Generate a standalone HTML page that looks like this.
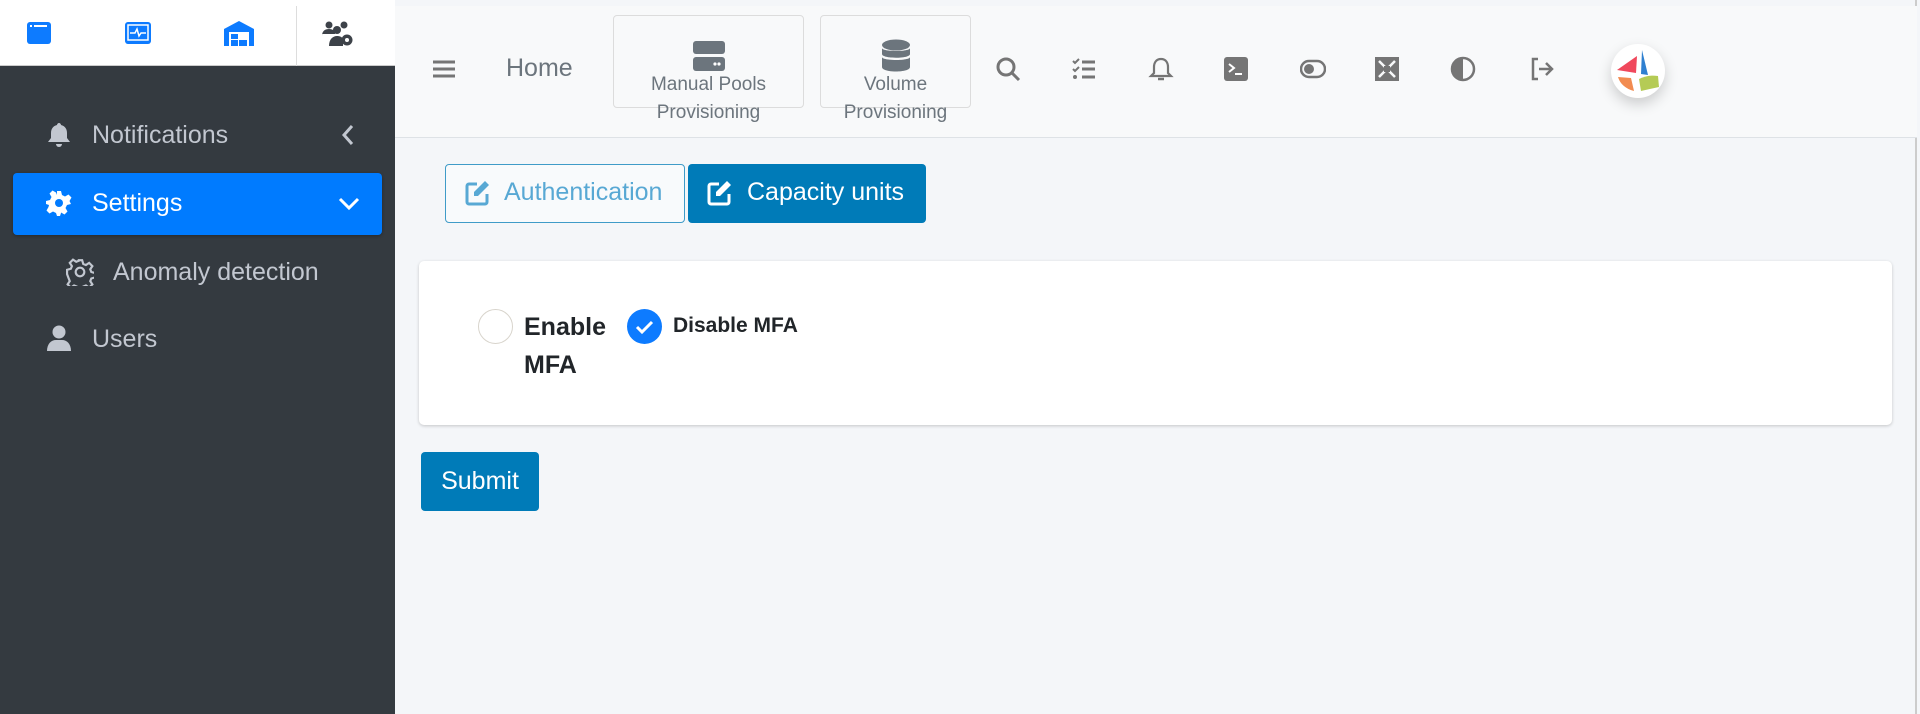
<!DOCTYPE html>
<html><head><meta charset="utf-8"><style>
*{box-sizing:border-box;margin:0;padding:0}
body{width:1920px;height:714px;overflow:hidden;background:#f4f6f9;font-family:"Liberation Sans",sans-serif;position:relative}
.abs{position:absolute}
#side{left:0;top:0;width:395px;height:714px;background:#343a40}
#sidetop{left:0;top:0;width:395px;height:66px;background:#fff;border-bottom:1px solid #ccc}
.nav{color:#c2c7d0;font-size:25px;line-height:28px}
#main{left:395px;top:0;width:1522px;height:714px;background:#f4f6f9;border-right:2px solid #ccc}
#hdr{left:395px;top:6px;width:1522px;height:132px;background:#f8f9fa;border-bottom:1px solid #dee2e6}
.box{border:1px solid #dcdcdc;border-radius:4px;background:#f8f9fa}
.ico{width:26px;height:26px;top:56px}
</style></head><body>
<div id="main" class="abs"></div>
<div id="hdr" class="abs"></div>
<div id="side" class="abs"></div>
<div id="sidetop" class="abs"></div>
<div class="abs" style="left:296px;top:6px;width:1px;height:60px;background:#ddd"></div>
<svg class="abs" style="left:26px;top:21px" width="26" height="24"><rect x="1" y="1" width="24" height="22" rx="3" fill="#0d7bff"/><rect x="4" y="4" width="2" height="2" fill="#fff"/><rect x="8" y="4" width="13" height="2" fill="#fff"/></svg>
<svg class="abs" style="left:124px;top:21px" width="28" height="24"><rect x="1" y="1" width="26" height="22" rx="3" fill="#0d7bff"/><rect x="4" y="4" width="20" height="15" fill="none" stroke="#fff" stroke-width="1.5"/><path d="M6 12h5l2-4 2 7 2-3h5" stroke="#fff" stroke-width="1.5" fill="none"/></svg>
<svg class="abs" style="left:223px;top:20px" width="32" height="26"><path d="M1 26V9L16 1l15 8v17h-5V12H6v14z" fill="#0d7bff"/><rect x="8" y="14" width="7" height="5" fill="#0d7bff"/><rect x="8" y="20" width="7" height="6" fill="#0d7bff"/><rect x="16" y="20" width="8" height="6" fill="#0d7bff"/></svg>
<svg class="abs" style="left:322px;top:20px" width="32" height="26" fill="#3d4249"><circle cx="7" cy="5" r="3.5"/><circle cx="22" cy="5" r="3.5"/><path d="M0 16c0-5 3-7 7-7s6 2 6 5H0z"/><circle cx="15" cy="10" r="4"/><path d="M7 26c0-7 4-10 8-10 3 0 5 1 6 3v7z"/><circle cx="25" cy="20" r="5.5"/><circle cx="25" cy="20" r="2" fill="#fff"/></svg>
<svg class="abs" style="left:47px;top:122px" width="24" height="26" fill="#c2c7d0"><path d="M12 1c1 0 2 1 2 2 4 1 6 4 6 8v5l3 4H1l3-4v-5c0-4 2-7 6-8 0-1 1-2 2-2z"/><path d="M9 22h6a3 3 0 0 1-6 0z"/></svg>
<div class="abs nav" style="left:92px;top:121px">Notifications</div>
<svg class="abs" style="left:341px;top:124px" width="14" height="22"><path d="M11 2L3 11l8 9" stroke="#c2c7d0" stroke-width="3" fill="none"/></svg>
<div class="abs" style="left:13px;top:173px;width:369px;height:62px;background:#007bff;border-radius:4px;box-shadow:0 1px 3px rgba(0,0,0,.3)"></div>
<svg class="abs" style="left:46px;top:190px" width="26" height="26" viewBox="0 0 26 26"><path fill="#fff" d="M11 1h4l1 4 3 1.5 3.5-2 3 3-2 3.5L25 14l0 0v0l-4 1-1.5 3 2 3.5-3 3-3.5-2L15 23l-1 3h-3l-1-3-3-1.5-3.5 2-3-3 2-3.5L3 15l-3-1v-3l4-1 1.5-3-2-3.5 3-3 3.5 2L11 5z"/><circle cx="13" cy="13" r="4" fill="#007bff"/></svg>
<div class="abs nav" style="left:92px;top:189px;color:#fff">Settings</div>
<svg class="abs" style="left:337px;top:196px" width="24" height="16"><path d="M3 3l9 9 9-9" stroke="#fff" stroke-width="3" fill="none"/></svg>
<svg class="abs" style="left:66px;top:258px" width="28" height="28" viewBox="0 0 26 26"><path fill="none" stroke="#c2c7d0" stroke-width="2" d="M11 2h4l1 3.5 2.5 1 3-2 3 3-2 3 1 2.5 3.5 1v4l-3.5 1-1 2.5 2 3-3 3-3-2-2.5 1-1 3.5h-4l-1-3.5-2.5-1-3 2-3-3 2-3-1-2.5L1 15v-4l3.5-1 1-2.5-2-3 3-3 3 2 2.5-1z"/><circle cx="13" cy="13" r="4" fill="none" stroke="#c2c7d0" stroke-width="2"/></svg>
<div class="abs nav" style="left:113px;top:258px">Anomaly detection</div>
<svg class="abs" style="left:47px;top:325px" width="24" height="26" fill="#c2c7d0"><circle cx="12" cy="7" r="6.5"/><path d="M0 26c0-7 4-11 9-11h6c5 0 9 4 9 11z"/></svg>
<div class="abs nav" style="left:92px;top:325px">Users</div>
<svg class="abs" style="left:432px;top:59px" width="24" height="20"><path d="M1 3h22M1 10h22M1 17h22" stroke="#757575" stroke-width="3"/></svg>
<div class="abs" style="left:506px;top:54px;font-size:25px;color:#6c757d">Home</div>
<div class="abs box" style="left:613px;top:15px;width:191px;height:93px"></div>
<div class="abs box" style="left:820px;top:15px;width:151px;height:93px"></div>
<svg class="abs" style="left:693px;top:41px" width="32" height="30"><rect x="0" y="0" width="32" height="13" rx="3" fill="#6c757d"/><rect x="0" y="16" width="32" height="14" rx="3" fill="#6c757d"/><circle cx="22" cy="23" r="1.6" fill="#fff"/><circle cx="26" cy="23" r="1.6" fill="#fff"/></svg>
<svg class="abs" style="left:881px;top:39px" width="30" height="34" fill="#6c757d"><ellipse cx="15" cy="6" rx="14" ry="5.5"/><path d="M1 9c0 4 28 4 28 0v6c0 5-28 5-28 0z"/><path d="M1 18c0 4 28 4 28 0v10c0 6-28 6-28 0z"/></svg>
<div class="abs" style="left:603px;top:71px;width:211px;text-align:center;font-size:19px;color:#6c757d;line-height:28px">Manual Pools<br>Provisioning</div>
<div class="abs" style="left:810px;top:71px;width:171px;text-align:center;font-size:19px;color:#6c757d;line-height:28px">Volume<br>Provisioning</div>
<svg class="abs ico" style="left:995px" viewBox="0 0 26 26"><circle cx="11" cy="11" r="8" fill="none" stroke="#757575" stroke-width="3"/><path d="M17 17l7 7" stroke="#757575" stroke-width="3"/></svg>
<svg class="abs ico" style="left:1071px" viewBox="0 0 26 26"><path d="M2 5l2 2 4-4M2 13l2 2 4-4" stroke="#757575" stroke-width="2" fill="none"/><circle cx="4" cy="21" r="2" fill="#757575"/><path d="M11 6h13M11 13h13M11 21h13" stroke="#757575" stroke-width="3"/></svg>
<svg class="abs ico" style="left:1148px" viewBox="0 0 26 26"><path d="M13 3c5 0 7 4 7 8v6l3 3H3l3-3v-6c0-4 2-8 7-8z" fill="none" stroke="#757575" stroke-width="2.2"/><path d="M10 23h6" stroke="#757575" stroke-width="2.5"/></svg>
<svg class="abs ico" style="left:1223px" viewBox="0 0 26 26"><rect x="1" y="1" width="24" height="24" rx="3" fill="#757575"/><path d="M6 8l5 4-5 4M12 18h7" stroke="#fff" stroke-width="2" fill="none"/></svg>
<svg class="abs ico" style="left:1300px" viewBox="0 0 26 26"><rect x="1" y="5" width="24" height="16" rx="8" fill="none" stroke="#757575" stroke-width="2.5"/><circle cx="9" cy="13" r="5" fill="#757575"/></svg>
<svg class="abs ico" style="left:1374px" viewBox="0 0 26 26"><rect x="1" y="1" width="24" height="24" fill="#757575"/><path d="M5 5l16 16M21 5L5 21" stroke="#f8f9fa" stroke-width="2.5"/><rect x="10" y="10" width="6" height="6" fill="#757575"/></svg>
<svg class="abs ico" style="left:1450px" viewBox="0 0 26 26"><circle cx="13" cy="13" r="11" fill="none" stroke="#757575" stroke-width="2.5"/><path d="M13 2a11 11 0 0 0 0 22z" fill="#757575"/></svg>
<svg class="abs ico" style="left:1529px" viewBox="0 0 26 26"><path d="M9 3H4v20h5" stroke="#757575" stroke-width="2.5" fill="none"/><path d="M10 13h13M17 7l6 6-6 6" stroke="#757575" stroke-width="2.5" fill="none"/></svg>
<div class="abs" style="left:1611px;top:44px;width:54px;height:54px;border-radius:50%;background:#fff;box-shadow:0 6px 14px rgba(0,0,0,.18)"></div>
<svg class="abs" style="left:1611px;top:44px" width="54" height="54" viewBox="0 0 54 54"><path d="M6 26L26 12 25 29z" fill="#f0485c"/><path d="M31 6l6 25-7-1z" fill="#2f80d0"/><path d="M7 33l13 1 3 13c-8-2-14-7-16-14z" fill="#f28b50"/><path d="M28 35c6-3 12-4 19-3l1 11-18 4z" fill="#b5cb55"/></svg>
<div class="abs" style="left:445px;top:164px;width:240px;height:59px;border:1px solid #3f9bc8;border-radius:4px;background:#f8fafc"></div>
<svg class="abs" style="left:465px;top:180px" width="26" height="26"><path d="M12 4H4a2 2 0 0 0-2 2v16a2 2 0 0 0 2 2h16a2 2 0 0 0 2-2v-8" stroke="#58a8d4" stroke-width="3" fill="none"/><path d="M20 1l4 4-11 11H9v-4z" fill="#58a8d4"/></svg>
<div class="abs" style="left:504px;top:178px;font-size:25px;color:#58a8d4">Authentication</div>
<div class="abs" style="left:688px;top:164px;width:238px;height:59px;border-radius:4px;background:#007bb8"></div>
<svg class="abs" style="left:707px;top:180px" width="26" height="26"><path d="M12 4H4a2 2 0 0 0-2 2v16a2 2 0 0 0 2 2h16a2 2 0 0 0 2-2v-8" stroke="#fff" stroke-width="3" fill="none"/><path d="M20 1l4 4-11 11H9v-4z" fill="#fff"/></svg>
<div class="abs" style="left:747px;top:178px;font-size:25px;color:#fff">Capacity units</div>
<div class="abs" style="left:419px;top:261px;width:1473px;height:164px;background:#fff;border-radius:5px;box-shadow:0 1px 3px rgba(0,0,0,.2)"></div>
<div class="abs" style="left:478px;top:309px;width:35px;height:35px;border-radius:50%;border:1.5px solid #d8d4cc;background:#fff"></div>
<div class="abs" style="left:524px;top:308px;font-size:25px;font-weight:bold;color:#212529;line-height:38px">Enable<br>MFA</div>
<div class="abs" style="left:627px;top:309px;width:35px;height:35px;border-radius:50%;background:#0d7bff"></div>
<svg class="abs" style="left:627px;top:309px" width="35" height="35"><path d="M10 18l5 5 10-10" stroke="#fff" stroke-width="3" fill="none"/></svg>
<div class="abs" style="left:673px;top:314px;font-size:21px;font-weight:bold;color:#212529">Disable MFA</div>
<div class="abs" style="left:421px;top:452px;width:118px;height:59px;border-radius:4px;background:#007bb8;color:#fff;font-size:25px;line-height:59px;text-align:center">Submit</div>
</body></html>
